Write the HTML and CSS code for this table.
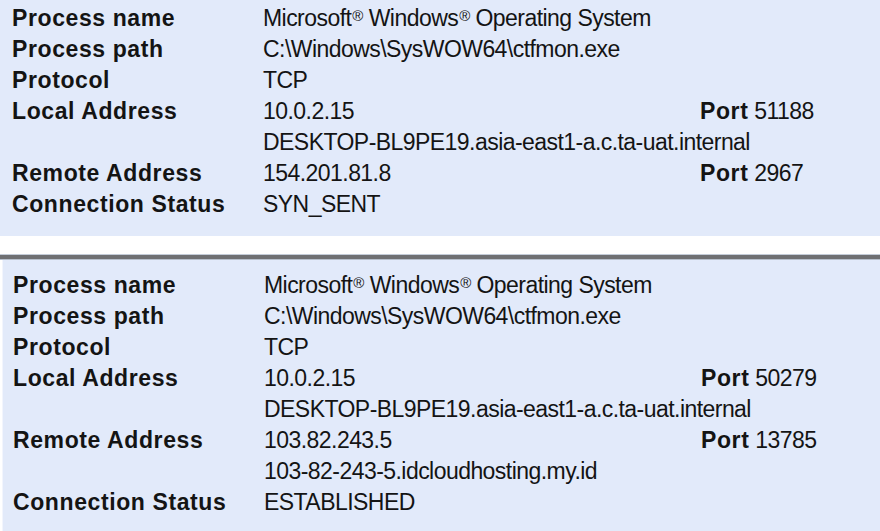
FILE: index.html
```html
<!DOCTYPE html>
<html>
<head>
<meta charset="utf-8">
<link rel="stylesheet" href="styles.css">
</head>
<body>
<div class="panel first">
  <div class="grid">
    <div class="lbl">Process name</div><div class="val wide">Microsoft<sup>®</sup> Windows<sup>®</sup> Operating System</div>
    <div class="lbl">Process path</div><div class="val wide">C:\Windows\SysWOW64\ctfmon.exe</div>
    <div class="lbl">Protocol</div><div class="val wide">TCP</div>
    <div class="lbl">Local Address</div><div class="val">10.0.2.15</div><div class="port"><b>Port</b> 51188</div>
    <div class="lbl"></div><div class="val wide">DESKTOP-BL9PE19.asia-east1-a.c.ta-uat.internal</div>
    <div class="lbl">Remote Address</div><div class="val">154.201.81.8</div><div class="port"><b>Port</b> 2967</div>
    <div class="lbl">Connection Status</div><div class="val wide">SYN_SENT</div>
  </div>
</div>
<div class="sep"></div>
<div class="panel second">
  <div class="grid">
    <div class="lbl">Process name</div><div class="val wide">Microsoft<sup>®</sup> Windows<sup>®</sup> Operating System</div>
    <div class="lbl">Process path</div><div class="val wide">C:\Windows\SysWOW64\ctfmon.exe</div>
    <div class="lbl">Protocol</div><div class="val wide">TCP</div>
    <div class="lbl">Local Address</div><div class="val">10.0.2.15</div><div class="port"><b>Port</b> 50279</div>
    <div class="lbl"></div><div class="val wide">DESKTOP-BL9PE19.asia-east1-a.c.ta-uat.internal</div>
    <div class="lbl">Remote Address</div><div class="val">103.82.243.5</div><div class="port"><b>Port</b> 13785</div>
    <div class="lbl"></div><div class="val wide">103-82-243-5.idcloudhosting.my.id</div>
    <div class="lbl">Connection Status</div><div class="val wide">ESTABLISHED</div>
  </div>
</div>
</body>
</html>
```
FILE: styles.css
```css
html, body {
  margin: 0;
  padding: 0;
  background: #ffffff;
  width: 880px;
  height: 531px;
  overflow: hidden;
}
body {
  font-family: "Liberation Sans", Arial, sans-serif;
  font-size: 23px;
  color: #141414;
}
.panel {
  background: #e2eafa;
  padding-left: 12px;
}
.first {
  height: 236px;
  padding-top: 3px;
  box-sizing: border-box;
}
.sep {
  margin-top: 18px;
  height: 6px;
  box-sizing: border-box;
  border-top: 1px solid #c4ccd8;
  border-bottom: 1px solid #b6bfcc;
  background: #6f7073;
}
.second {
  height: 280px;
  padding-top: 10px;
  box-sizing: border-box;
  border-left: 1px solid #f2f5fd;
  margin-left: 2px;
  padding-left: 10px;
}
.grid {
  display: grid;
  grid-template-columns: 251px 437px auto;
  grid-auto-rows: 31px;
  align-items: center;
}
.lbl {
  font-weight: bold;
  grid-column: 1;
  letter-spacing: 0.6px;
}
.val {
  grid-column: 2;
  white-space: nowrap;
  letter-spacing: -0.55px;
}
.val.wide { grid-column: 2 / 4; }
.val sup {
  font-size: 15px;
  vertical-align: 5px;
  line-height: 0;
  margin-left: 1px;
}
.port {
  grid-column: 3;
  white-space: nowrap;
  letter-spacing: -0.55px;
}
.port b {
  font-weight: bold;
  letter-spacing: 0.6px;
}
```
